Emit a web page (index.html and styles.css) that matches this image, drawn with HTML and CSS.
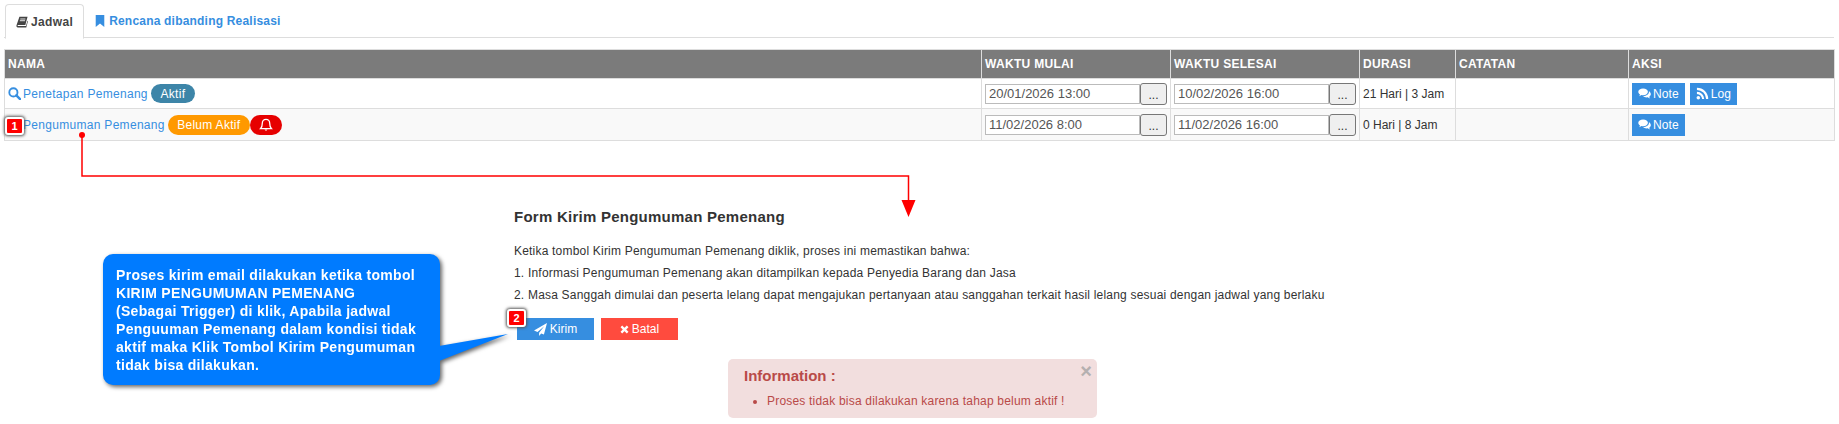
FILE: index.html
```html
<!DOCTYPE html>
<html>

<head>
    <meta charset="UTF-8">
    <title>Jadwal</title>
    <link rel="stylesheet" href="styles.css">
</head>

<body>
    <div class="page">
        <ul class="tabs">
            <li class="tab active">
                <svg class="ico" viewBox="0 0 14 14"><path d="M4 1h9.500l-2.600 9.600H2.600c-.8 0-1 .9-.3 1h9.400l1.600-6 .6.4-1.900 7.500H2.200C.8 13.500.2 12.100.6 10.800z" fill="#444"/><path d="M5 3.500h6M4.500 5.500h6" stroke="#fff" fill="none"/></svg>
                Jadwal
            </li>
            <li class="tab">
                <svg class="ico" viewBox="0 0 14 14"><path d="M2 0h10v14l-5-4-5 4z" fill="#368ee0"/></svg>
                Rencana dibanding Realisasi
            </li>
        </ul>

        <table class="jadwal">
            <colgroup>
                <col class="c-nama">
                <col class="c-waktu">
                <col class="c-waktu">
                <col class="c-durasi">
                <col class="c-catatan">
                <col class="c-aksi">
            </colgroup>
            <thead>
                <tr>
                    <th>NAMA</th>
                    <th>WAKTU MULAI</th>
                    <th>WAKTU SELESAI</th>
                    <th>DURASI</th>
                    <th>CATATAN</th>
                    <th>AKSI</th>
                </tr>
            </thead>
            <tbody>
                <tr>
                    <td>
                        <div class="nama">
                            <svg class="ico-search" viewBox="0 0 14 14"><circle cx="5.800" cy="5.800" r="4.400" fill="none" stroke="#368ee0" stroke-width="2"/><path d="M9 9l4 4" stroke="#368ee0" stroke-width="2.600" stroke-linecap="round"/></svg>
                            <a class="link">Penetapan Pemenang</a>
                            <span class="pill blue">Aktif</span>
                        </div>
                    </td>
                    <td>
                        <div class="tgl"><span class="tgl-input">20/01/2026 13:00</span><span class="tgl-btn">...</span></div>
                    </td>
                    <td>
                        <div class="tgl"><span class="tgl-input">10/02/2026 16:00</span><span class="tgl-btn">...</span></div>
                    </td>
                    <td>21 Hari | 3 Jam</td>
                    <td></td>
                    <td>
                        <div class="aksi">
                            <span class="btn">
                                <svg class="ico-sm" viewBox="0 0 14 14"><path d="M5.500 1.500C2.500 1.500.3 3.100.3 5.200c0 1.200.7 2.200 1.900 2.900L1.400 9.900l2.300-1.200c.6.100 1.200.2 1.800.2 3 0 5.200-1.600 5.200-3.700S8.500 1.500 5.500 1.500z" fill="#fff"/><path d="M11.700 4.300c.1.300.1.600.1.900 0 2.600-2.600 4.600-6 4.600h-.4c.9.900 2.200 1.400 3.800 1.400.4 0 .8 0 1.200-.1l2.300 1.300-.6-1.900c1-.6 1.700-1.600 1.700-2.600 0-1.500-.8-2.800-2.100-3.600z" fill="#fff"/></svg>
                                Note
                            </span>
                            <span class="btn">
                                <svg class="ico-sm" viewBox="0 0 14 14"><circle cx="2.500" cy="11.500" r="1.900" fill="#fff"/><path d="M1 6.300a6.700 6.700 0 0 1 6.700 6.700M1 2a11 11 0 0 1 11 11" fill="none" stroke="#fff" stroke-width="2.300"/></svg>
                                Log
                            </span>
                        </div>
                    </td>
                </tr>
                <tr class="alt">
                    <td>
                        <div class="nama nama-2">
                            <a class="link">Pengumuman Pemenang</a>
                            <span class="pill orange">Belum Aktif</span>
                            <span class="pill red">
                                <svg class="ico-bell" viewBox="0 0 14 14"><path d="M7 1.300c-2.300 0-3.700 1.700-3.700 3.900 0 3-.8 4.400-1.800 5.400h11c-1-1-1.800-2.400-1.800-5.400 0-2.200-1.400-3.900-3.700-3.900z" fill="none" stroke="#fff" stroke-width="1.300"/><path d="M5.500 11.600a1.600 1.600 0 0 0 3 0z" fill="#fff"/></svg>
                            </span>
                        </div>
                    </td>
                    <td>
                        <div class="tgl"><span class="tgl-input">11/02/2026 8:00</span><span class="tgl-btn">...</span></div>
                    </td>
                    <td>
                        <div class="tgl"><span class="tgl-input">11/02/2026 16:00</span><span class="tgl-btn">...</span></div>
                    </td>
                    <td>0 Hari | 8 Jam</td>
                    <td></td>
                    <td>
                        <div class="aksi">
                            <span class="btn">
                                <svg class="ico-sm" viewBox="0 0 14 14"><path d="M5.500 1.500C2.500 1.500.3 3.100.3 5.200c0 1.200.7 2.200 1.900 2.900L1.400 9.900l2.300-1.200c.6.100 1.200.2 1.800.2 3 0 5.200-1.600 5.200-3.700S8.500 1.500 5.500 1.500z" fill="#fff"/><path d="M11.700 4.300c.1.300.1.600.1.900 0 2.600-2.600 4.600-6 4.600h-.4c.9.900 2.200 1.400 3.800 1.400.4 0 .8 0 1.200-.1l2.300 1.300-.6-1.900c1-.6 1.700-1.600 1.700-2.600 0-1.500-.8-2.800-2.100-3.600z" fill="#fff"/></svg>
                                Note
                            </span>
                        </div>
                    </td>
                </tr>
            </tbody>
        </table>

        <div class="form">
            <h3>Form Kirim Pengumuman Pemenang</h3>
            <p>Ketika tombol Kirim Pengumuman Pemenang diklik, proses ini memastikan bahwa:</p>
            <p>1. Informasi Pengumuman Pemenang akan ditampilkan kepada Penyedia Barang dan Jasa</p>
            <p>2. Masa Sanggah dimulai dan peserta lelang dapat mengajukan pertanyaan atau sanggahan terkait hasil lelang sesuai dengan jadwal yang berlaku</p>
            <div class="form-btns">
                <span class="fbtn kirim">
                    <svg class="ico-sm" viewBox="0 0 14 14"><path d="M14 0L0 8l3.800 1.600L11 3.500 5.500 10.500V14l2.200-2.800 3 1.300z" fill="#fff"/></svg>
                    Kirim
                </span>
                <span class="fbtn batal">
                    <svg class="ico-x" viewBox="0 0 10 10"><path d="M1.500 1.500l7 7M8.500 1.500l-7 7" stroke="#fff" stroke-width="2.600" fill="none"/></svg>
                    Batal
                </span>
            </div>
        </div>

        <div class="alert">
            <span class="alert-close">&times;</span>
            <h4>Information :</h4>
            <ul>
                <li>Proses tidak bisa dilakukan karena tahap belum aktif !</li>
            </ul>
        </div>
    </div>

    <!-- annotations on top of the screenshot -->
    <svg class="connector" viewBox="0 0 1839 424">
        <circle cx="82" cy="135" r="3" fill="#f00"/>
        <path d="M82 135V176H908.500V202" fill="none" stroke="#f00" stroke-width="1.500"/>
        <path d="M901.500 200h14l-7 17z" fill="#f00"/>
    </svg>

    <span class="num num-1">1</span>
    <span class="num num-2">2</span>

    <div class="callout">
        <svg class="callout-tail" viewBox="0 0 72 32"><path d="M0 12L69 0 0 27z" fill="#007bff"/></svg>
        <div class="callout-body">
            Proses kirim email dilakukan ketika tombol<br>
            KIRIM PENGUMUMAN PEMENANG<br>
            (Sebagai Trigger) di klik, Apabila jadwal<br>
            Penguuman Pemenang dalam kondisi tidak<br>
            aktif maka Klik Tombol Kirim Pengumuman<br>
            tidak bisa dilakukan.
        </div>
    </div>
</body>

</html>
```

FILE: styles.css
```css
body {
    margin: 0;
    background: #fff;
    font-family: "Liberation Sans", Arial, sans-serif;
    font-size: 12px;
    color: #333;
}

.page {
    padding: 4px 5px 0 4px;
}

/* tabs */
.tabs {
    display: flex;
    list-style: none;
    margin: 0;
    padding: 0 0 0 1px;
    height: 33px;
    border-bottom: 1px solid #ddd;
    box-sizing: content-box;
}

.tab {
    display: flex;
    align-items: center;
    gap: 3px;
    padding: 0 10px;
    font-weight: bold;
    color: #368ee0;
    letter-spacing: 0.2px;
    height: 33px;
}

.tab.active {
    color: #444;
    background: #fff;
    border: 1px solid #ddd;
    border-bottom: 1px solid #fff;
    border-radius: 4px 4px 0 0;
    padding: 0 10px;
    letter-spacing: 0.35px;
}

.ico {
    width: 12px;
    height: 12px;
}

/* jadwal table */
.jadwal {
    width: 1831px;
    margin-top: 11px;
    border-collapse: collapse;
    table-layout: fixed;
    border: 1px solid #ddd;
}

.c-nama {
    width: 977px;
}

.c-waktu {
    width: 189px;
}

.c-durasi {
    width: 96px;
}

.c-catatan {
    width: 173px;
}

.jadwal th {
    background: #7b7b7b;
    color: #fff;
    text-align: left;
    font-size: 12px;
    letter-spacing: 0.3px;
    height: 28px;
    padding: 0 3px;
    border: 1px solid #ddd;
    border-bottom: 0;
}

.jadwal td {
    padding: 0 3px;
    height: 29px;
    border: 1px solid #ddd;
    color: #333;
}

.alt td {
    background: #f9f9f9;
    height: 31px;
}

.nama {
    display: flex;
    align-items: center;
    letter-spacing: 0.3px;
}

.nama-2 {
    padding-left: 15px;
}

.ico-search {
    width: 13px;
    height: 13px;
    margin-right: 2px;
}

.link {
    color: #368ee0;
    margin-right: 3px;
}

.pill {
    display: inline-flex;
    align-items: center;
    justify-content: center;
    color: #fff;
    border-radius: 10px;
    height: 19px;
}

.pill.blue {
    background: #3d85a8;
    width: 44px;
}

.pill.orange {
    background: #f90;
    width: 82px;
    height: 20px;
}

.pill.red {
    background: #e60000;
    width: 32px;
    height: 20px;
}

.ico-bell {
    width: 14px;
    height: 14px;
}

/* date field + picker button */
.tgl {
    display: flex;
    align-items: center;
}

.tgl-input {
    flex: 1;
    height: 20px;
    line-height: 18px;
    box-sizing: border-box;
    border: 1px solid #bbb;
    padding-left: 3px;
    font-size: 13px;
    color: #555;
    background: #fff;
}

.tgl-btn {
    width: 27px;
    height: 22px;
    box-sizing: border-box;
    border: 1px solid #777;
    border-radius: 3px;
    background: #efefef;
    text-align: center;
    line-height: 22px;
    color: #333;
}

.aksi {
    display: flex;
    gap: 5px;
}

.btn {
    display: flex;
    align-items: center;
    gap: 2px;
    height: 22px;
    padding: 0 6px;
    background: #368ee0;
    color: #fff;
    font-size: 12px;
    letter-spacing: 0.1px;
}

.ico-sm {
    width: 13px;
    height: 13px;
}

/* form */
.form {
    margin: 68px 0 0 510px;
}

.form h3 {
    margin: 0 0 19px;
    font-size: 15px;
    line-height: 16px;
    letter-spacing: 0.25px;
    color: #333;
}

.form p {
    margin: 0 0 8px;
    line-height: 14px;
    letter-spacing: 0.2px;
    color: #333;
}

.form-btns {
    display: flex;
    gap: 7px;
    margin: 16px 0 0 3px;
}

.fbtn {
    display: flex;
    align-items: center;
    justify-content: center;
    gap: 3px;
    width: 77px;
    height: 22px;
    color: #fff;
}

.kirim {
    background: #368ee0;
}

.batal {
    background: #ff4b3e;
}

.ico-x {
    width: 9px;
    height: 9px;
}

/* alert */
.alert {
    position: relative;
    width: 369px;
    height: 59px;
    box-sizing: border-box;
    margin: 19px 0 0 724px;
    padding: 8px 16px;
    background: #f2dede;
    border-radius: 5px;
    color: #b94a48;
}

.alert h4 {
    margin: 0;
    font-size: 15px;
    line-height: 18px;
}

.alert ul {
    margin: 9px 0 0;
    padding-left: 23px;
    line-height: 14px;
    letter-spacing: 0.2px;
}

.alert-close {
    position: absolute;
    top: 2px;
    right: 5px;
    font-size: 20px;
    font-weight: bold;
    line-height: 20px;
    color: #b5b0b0;
}

/* annotations */
.connector {
    position: absolute;
    left: 0;
    top: 0;
    width: 1839px;
    height: 424px;
    pointer-events: none;
}

.num {
    position: absolute;
    width: 15px;
    height: 14px;
    background: #f00;
    color: #fff;
    font-weight: bold;
    font-size: 11px;
    line-height: 14px;
    text-align: center;
    border: 2px solid #fff;
    border-radius: 3px;
    box-shadow: 0 0 3px 1px #555;
}

.num-1 {
    left: 5px;
    top: 117px;
}

.num-2 {
    left: 507px;
    top: 309px;
}

.callout {
    position: absolute;
    left: 103px;
    top: 254px;
    width: 337px;
    height: 131px;
    filter: drop-shadow(2px 2px 2px rgba(0, 0, 0, 0.6));
}

.callout-body {
    position: relative;
    box-sizing: border-box;
    height: 131px;
    padding: 12px 13px;
    background: #007bff;
    border-radius: 10px;
    color: #fff;
    font-size: 14px;
    font-weight: bold;
    line-height: 18px;
    letter-spacing: 0.3px;
}

.callout-tail {
    position: absolute;
    left: 336px;
    top: 80px;
    width: 72px;
    height: 32px;
}
```
